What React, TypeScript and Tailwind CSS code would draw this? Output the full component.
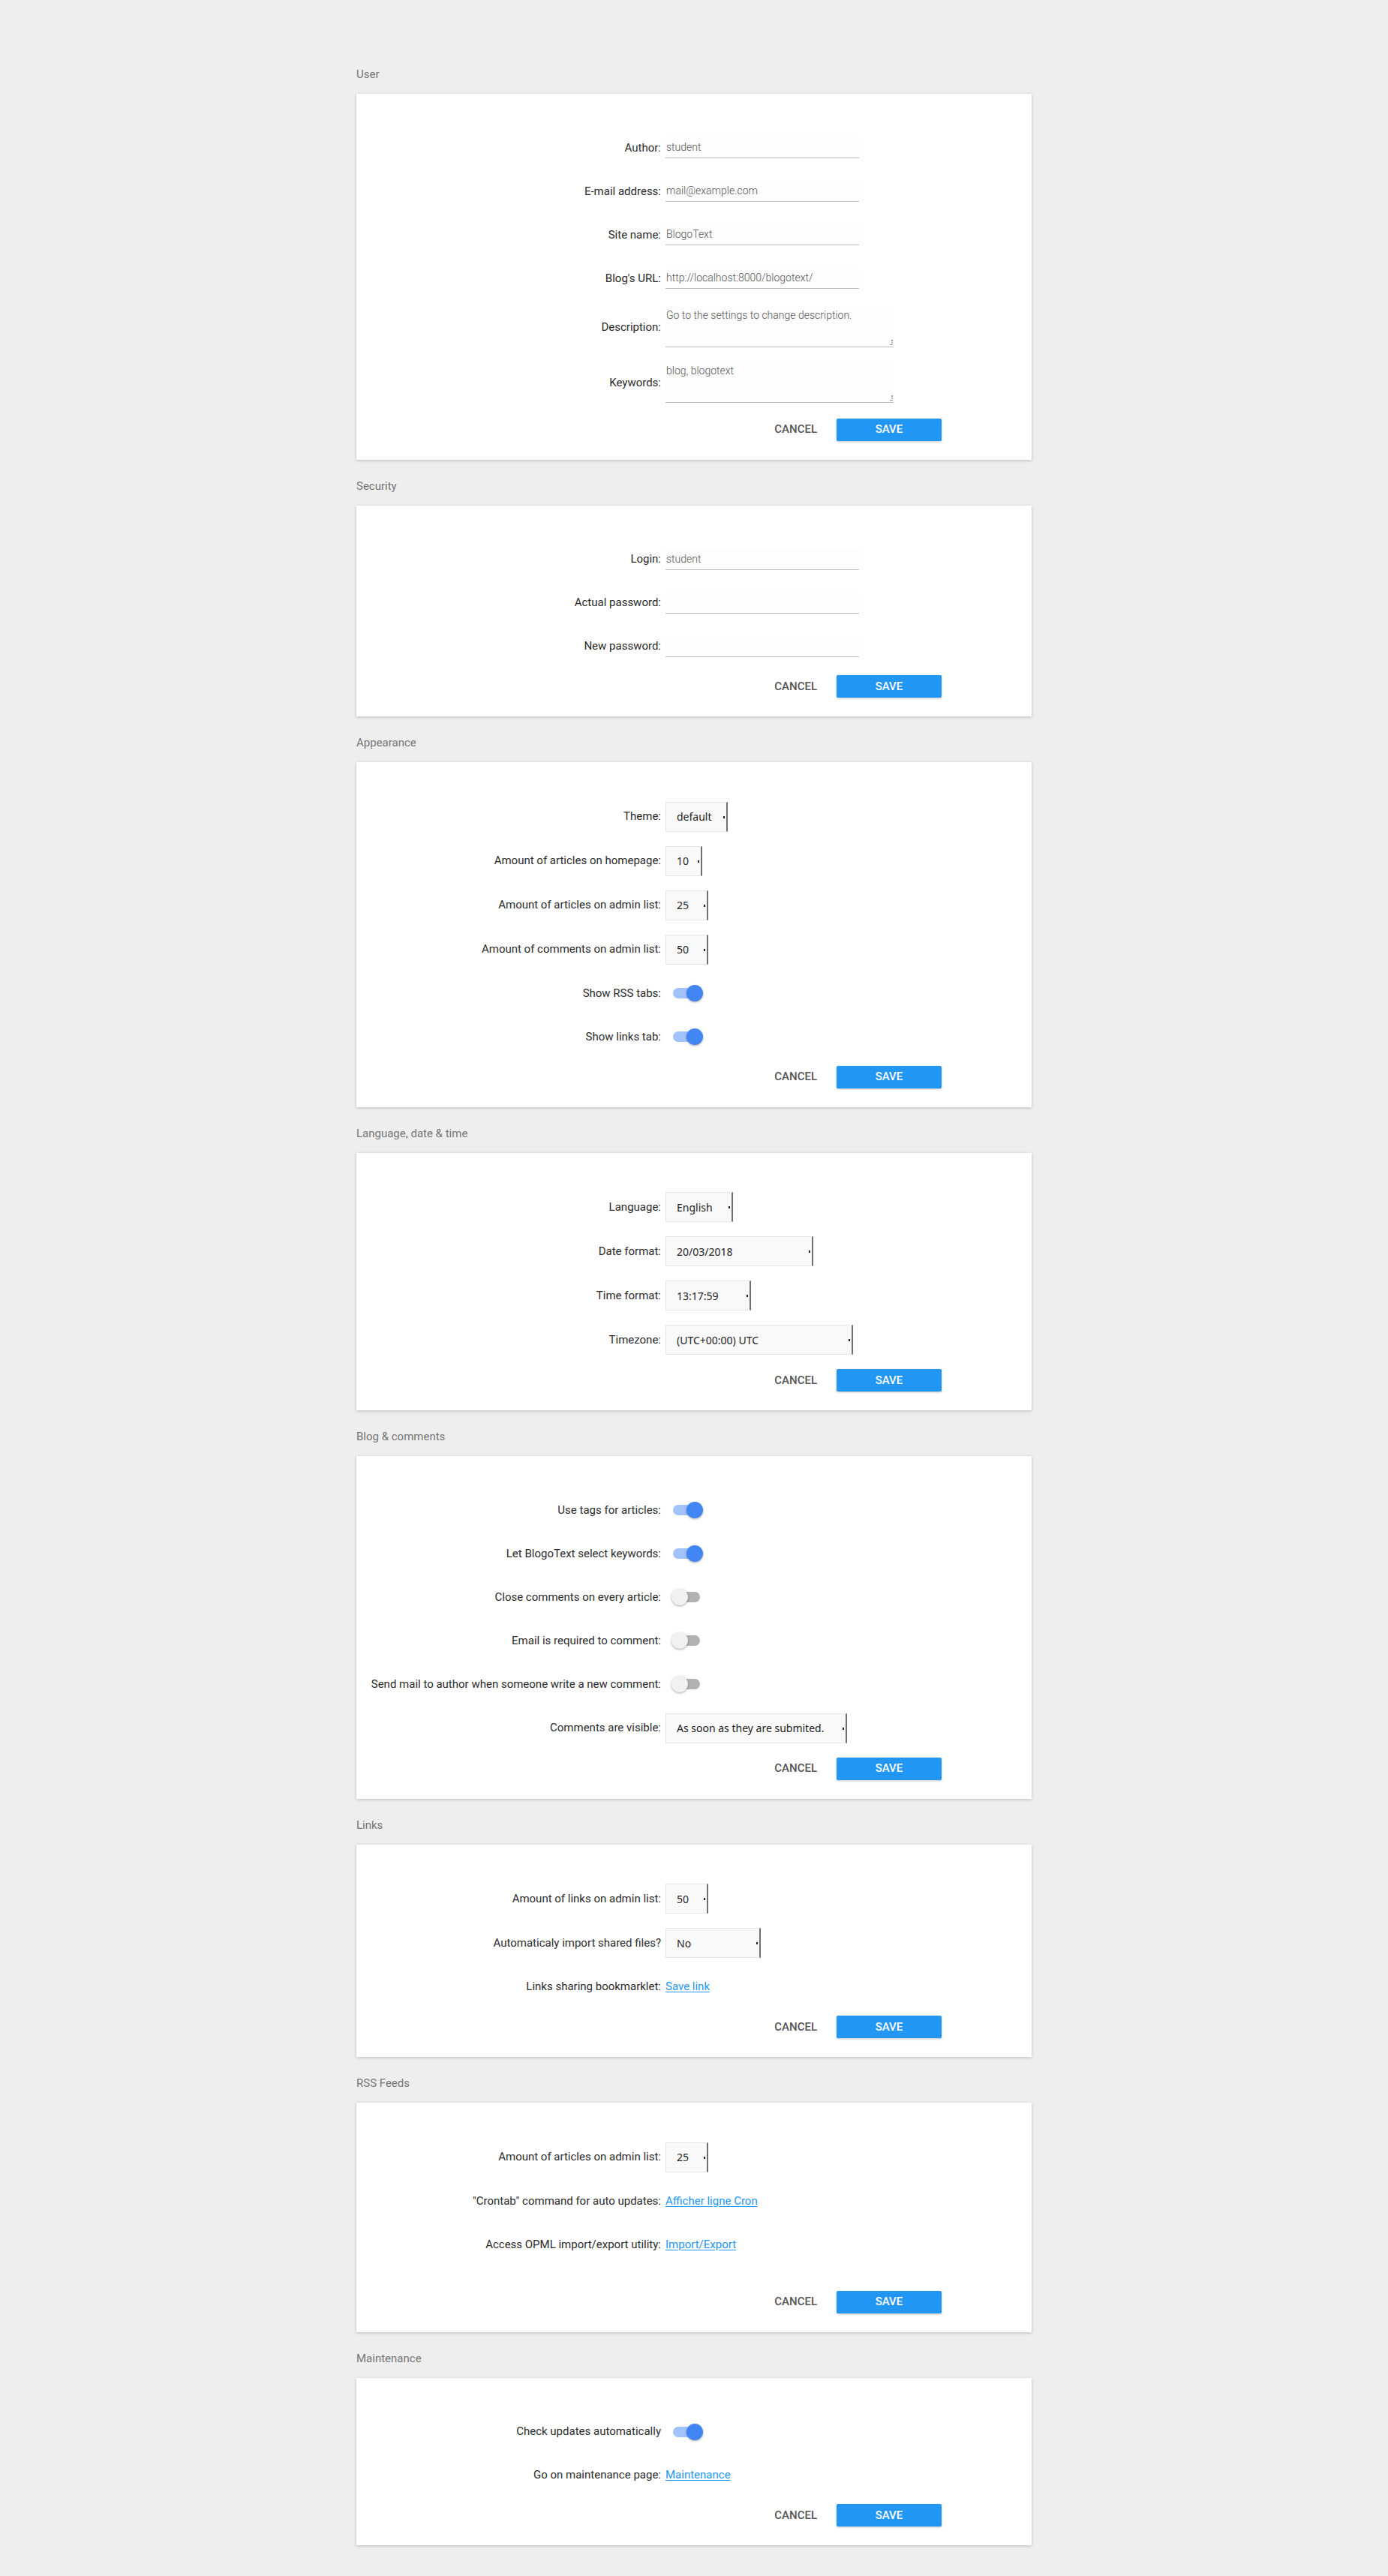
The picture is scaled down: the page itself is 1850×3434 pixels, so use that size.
import React from "react";

type Field =
  | { kind: "input"; label: string; value?: string }
  | { kind: "textarea"; label: string; value: string; row: string }
  | { kind: "select"; label: string; value: string; w: string }
  | { kind: "toggle"; label: string; on: boolean }
  | { kind: "link"; label: string; text: string }
  | { kind: "spacer" };

interface SectionData {
  title: string;
  fields: Field[];
}

const sections: SectionData[] = [
  {
    title: "User",
    fields: [
      { kind: "input", label: "Author:", value: "student" },
      { kind: "input", label: "E-mail address:", value: "mail@example.com" },
      { kind: "input", label: "Site name:", value: "BlogoText" },
      { kind: "input", label: "Blog's URL:", value: "http://localhost:8000/blogotext/" },
      { kind: "textarea", label: "Description:", value: "Go to the settings to change description.", row: "h-[72px]" },
      { kind: "textarea", label: "Keywords:", value: "blog, blogotext", row: "h-[76px]" },
    ],
  },
  {
    title: "Security",
    fields: [
      { kind: "input", label: "Login:", value: "student" },
      { kind: "input", label: "Actual password:" },
      { kind: "input", label: "New password:" },
    ],
  },
  {
    title: "Appearance",
    fields: [
      { kind: "select", label: "Theme:", value: "default", w: "w-[83px]" },
      { kind: "select", label: "Amount of articles on homepage:", value: "10", w: "w-[49px]" },
      { kind: "select", label: "Amount of articles on admin list:", value: "25", w: "w-[57px]" },
      { kind: "select", label: "Amount of comments on admin list:", value: "50", w: "w-[57px]" },
      { kind: "toggle", label: "Show RSS tabs:", on: true },
      { kind: "toggle", label: "Show links tab:", on: true },
    ],
  },
  {
    title: "Language, date & time",
    fields: [
      { kind: "select", label: "Language:", value: "English", w: "w-[90px]" },
      { kind: "select", label: "Date format:", value: "20/03/2018", w: "w-[197px]" },
      { kind: "select", label: "Time format:", value: "13:17:59", w: "w-[114px]" },
      { kind: "select", label: "Timezone:", value: "(UTC+00:00) UTC", w: "w-[250px]" },
    ],
  },
  {
    title: "Blog & comments",
    fields: [
      { kind: "toggle", label: "Use tags for articles:", on: true },
      { kind: "toggle", label: "Let BlogoText select keywords:", on: true },
      { kind: "toggle", label: "Close comments on every article:", on: false },
      { kind: "toggle", label: "Email is required to comment:", on: false },
      { kind: "toggle", label: "Send mail to author when someone write a new comment:", on: false },
      { kind: "select", label: "Comments are visible:", value: "As soon as they are submited.", w: "w-[242px]" },
    ],
  },
  {
    title: "Links",
    fields: [
      { kind: "select", label: "Amount of links on admin list:", value: "50", w: "w-[57px]" },
      { kind: "select", label: "Automaticaly import shared files?", value: "No", w: "w-[127px]" },
      { kind: "link", label: "Links sharing bookmarklet:", text: "Save link" },
    ],
  },
  {
    title: "RSS Feeds",
    fields: [
      { kind: "select", label: "Amount of articles on admin list:", value: "25", w: "w-[57px]" },
      { kind: "link", label: "\"Crontab\" command for auto updates:", text: "Afficher ligne Cron" },
      { kind: "link", label: "Access OPML import/export utility:", text: "Import/Export" },
      { kind: "spacer" },
    ],
  },
  {
    title: "Maintenance",
    fields: [
      { kind: "toggle", label: "Check updates automatically", on: true },
      { kind: "link", label: "Go on maintenance page:", text: "Maintenance" },
    ],
  },
];

const Label = ({ children }: { children: React.ReactNode }) => (
  <div className="w-[412px] shrink-0 pr-[6px] text-right text-[15px] text-[#2b2b2b]">{children}</div>
);

const Switch = ({ on }: { on: boolean }) => (
  <div className="relative ml-[10px] w-[40px] h-[22px]">
    <div
      className={`absolute left-0 top-[4px] w-[36px] h-[14px] rounded-full ${
        on ? "bg-[#a1c2fa]" : "bg-[#b2b2b2]"
      }`}
    />
    <div
      className={`absolute top-0 w-[22px] h-[22px] rounded-full shadow-[0_1px_3px_rgba(0,0,0,0.35)] ${
        on ? "left-[18px] bg-[#4285f4]" : "left-[-2px] bg-[#f1f1f1]"
      }`}
    />
  </div>
);

const FieldRow = ({ field }: { field: Field }) => {
  if (field.kind === "spacer") return <div className="h-[23px]" />;

  if (field.kind === "input") {
    return (
      <div className="flex items-center h-[58px]">
        <Label>{field.label}</Label>
        <div className="w-[258px] h-[28px] flex items-center px-[1px] bg-[#fdfdfd] border-b border-[#bdbdbd] text-[14px] font-light text-[#555]">
          {field.value}
        </div>
      </div>
    );
  }

  if (field.kind === "textarea") {
    return (
      <div className={`flex items-center ${field.row}`}>
        <Label>{field.label}</Label>
        <div className="relative w-[304px] h-[54px] pt-[2px] px-[1px] bg-[#fdfdfd] border-b border-[#bdbdbd] text-[14px] leading-[18px] font-light text-[#555]">
          {field.value}
          <div className="absolute right-[1px] bottom-[2px] flex flex-col items-end gap-[1px]">
            <div className="w-[2px] h-[2px] bg-[#999]" />
            <div className="w-[2px] h-[2px] bg-[#bbb]" />
            <div className="w-[4px] h-[1px] bg-[#999]" />
          </div>
        </div>
      </div>
    );
  }

  if (field.kind === "select") {
    return (
      <div className="flex items-center h-[59px]">
        <Label>{field.label}</Label>
        <div
          className={`relative ${field.w} h-[40px] flex items-center pl-[14px] bg-[#f9f9f9] border border-[#e6e6e6] border-r-2 border-r-[#707070] text-[14px] text-[#222] [font-family:'Noto_Sans',sans-serif] whitespace-nowrap`}
        >
          {field.value}
          <div className="absolute right-[2px] top-[18px] w-[2px] h-[3px] bg-[#222]" />
        </div>
      </div>
    );
  }

  if (field.kind === "toggle") {
    return (
      <div className="flex items-center h-[58px]">
        <Label>{field.label}</Label>
        <Switch on={field.on} />
      </div>
    );
  }

  return (
    <div className="flex items-center h-[58px]">
      <Label>{field.label}</Label>
      <a href="#" className="text-[15px] text-[#2196f3] underline underline-offset-2">
        {field.text}
      </a>
    </div>
  );
};

const Section = ({ data }: { data: SectionData }) => (
  <section>
    <h2 className="h-[20px] leading-[20px] mb-[16px] text-[15px] text-[#757575]">{data.title}</h2>
    <div className="bg-white pt-[43px] pb-[15.5px] shadow-[0_1px_4px_rgba(0,0,0,0.22)]">
      {data.fields.map((f, i) => (
        <FieldRow key={i} field={f} />
      ))}
      <div className="flex items-center justify-end h-[49px] pr-[120px]">
        <button className="h-[30px] px-[16px] mr-[10px] text-[15px] font-medium uppercase text-[#555]">
          Cancel
        </button>
        <button className="w-[140px] h-[30px] rounded-[2px] bg-[#2196f3] text-[15px] font-medium uppercase text-white shadow-[0_1px_3px_rgba(0,0,0,0.25)]">
          Save
        </button>
      </div>
    </div>
  </section>
);

export default function App() {
  return (
    <div className="min-h-screen bg-[#eeeeee] pt-[89px] pb-[41px] [font-family:Roboto,'Liberation_Sans',sans-serif]">
      <div className="w-[900px] mx-auto flex flex-col gap-[25px]">
        {sections.map((s) => (
          <Section key={s.title} data={s} />
        ))}
      </div>
    </div>
  );
}
